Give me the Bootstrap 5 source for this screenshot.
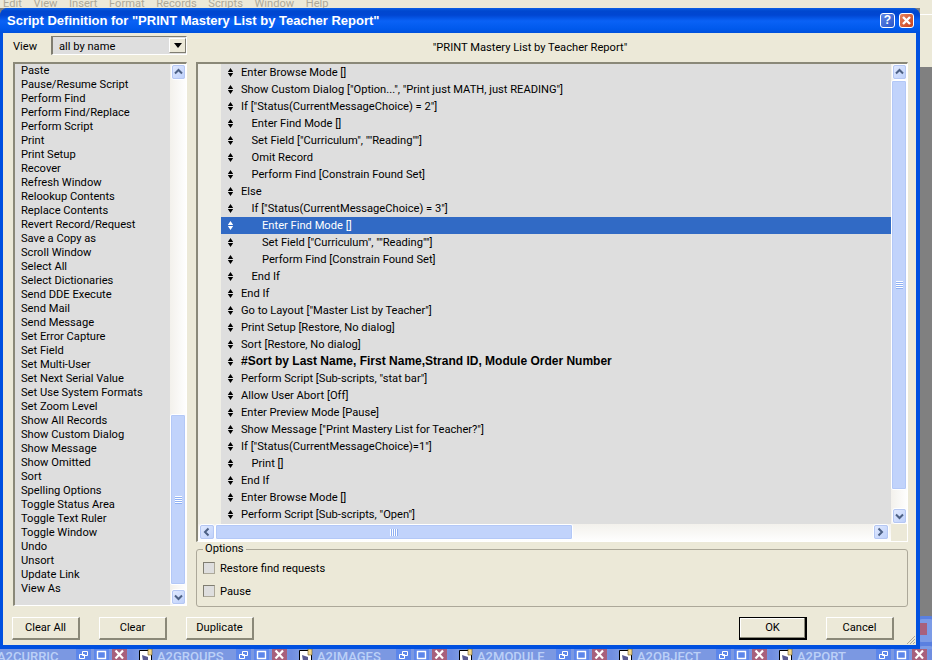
<!DOCTYPE html>
<html lang="en">
<head>
<meta charset="utf-8">
<title>Script Definition</title>
<link href="https://cdn.jsdelivr.net/npm/bootstrap@5.3.0/dist/css/bootstrap.min.css" rel="stylesheet">
<style>
html,body{height:660px;overflow:hidden;}
body{background:#808080;font-family:Roboto,"Liberation Sans",Arial,sans-serif;font-size:11.15px;line-height:14px;color:#000;}
.menu-strip{height:8px;background:#ece9d8;color:#aca899;overflow:hidden;padding-left:3px;gap:11.5px;line-height:7px;font-size:11.15px;}
.desk{height:641px;}
.dlg{width:920px;flex:none;border-radius:8px 8px 0 0;background:#0050e0;overflow:hidden;}
.dlg-title{height:25px;padding:0 6px 0 7px;background:linear-gradient(#0a5fe6 0,#0047cf 3px,#0046d2 7px,#0a62f6 13px,#0059ec 21px,#0050dc 25px);color:#fff;font-family:"Liberation Sans",Arial,sans-serif;font-weight:700;font-size:13px;}
.tbtn{width:15px;height:15px;border:1px solid #fff;border-radius:3px;font-size:12px;line-height:12px;text-align:center;color:#fff;font-weight:700;}
.tbtn-help{background:linear-gradient(135deg,#5f87e8,#2a55c8);}
.tbtn-close{background:linear-gradient(135deg,#e8845e,#c8401c);}
.dlg-body{height:612px;margin:0 4px 4px 3px;background:#ece9d8;padding:3px 8px 7px 10px;}
.col-left{width:174px;flex:none;margin-right:9px;}
.col-right{width:712px;flex:none;}
.view-row{height:19px;margin-bottom:7px;}
.view-label{width:38px;padding-top:2px;}
.view-box{width:136px;height:19px;background:#dedede;border:1px solid #fff;border-top-color:#7f7d71;border-left:2px solid #7f7d71;padding-left:6px;}
.view-box>span:first-child{padding-top:2px;}
.view-arrow{width:17px;height:15px;background:#ece9d8;border:1px solid #fff;border-right-color:#7f7d71;border-bottom-color:#7f7d71;}
.view-arrow i{display:block;width:0;height:0;border:4px solid transparent;border-top:5px solid #000;border-bottom:0;}
.panel-sunk{border-style:solid;border-width:2px 1px 1px 2px;border-color:#8a8878 #fff #fff #8a8878;}
.cmd-list{height:544px;background:#dedede;}
.cmd-items{flex:1;padding:0 0 0 6px;margin:0;list-style:none;background:#dedede;border:0;border-radius:0;}
.cmd-items li{height:14px;white-space:nowrap;}
.sb-v{width:16px;flex:none;}
.sb-track-v{background:linear-gradient(90deg,#f3f1ec,#fefefe);}
.sb-track-h{background:linear-gradient(#f3f1ec,#fefefe);}
.sb-btn{flex:none;width:15px;height:16px;background:linear-gradient(135deg,#e3ebff,#bccffa);border:1px solid #fff;outline:1px solid #b5c7f3;outline-offset:-2px;border-radius:3px;}
.sb-btn svg{display:block;}
.sb-thumb{background:#c1d3fb;border:1px solid #fff;border-radius:2px;box-shadow:inset 0 0 0 1px #b3c8f7;}
.sb-btn-h{width:16px;margin-left:1px;}
.sb-btn-h2{width:16px;margin-right:2px;}
.grip-lines{width:7px;height:8px;background:repeating-linear-gradient(#fff 0 1px,#8fb0f3 1px 2px);}
.grip-lines-h{width:8px;height:7px;background:repeating-linear-gradient(90deg,#fff 0 1px,#8fb0f3 1px 2px);}
.heading-row{height:19px;margin-bottom:7px;padding-right:44px;padding-top:4px;}
.script-panel{height:480px;background:#ece9d8;}
.gutter{width:23px;flex:none;background:#f0efe6;}
.rows{flex:1;background:#dedede;}
.srow{height:17px;padding-left:6px;white-space:nowrap;line-height:17px;}
.srow svg{flex:none;margin-right:7px;}
.srow.active{background:#316ac5;color:#fff;}
.srow.boldrow{font-weight:700;font-family:"Liberation Sans",Arial,sans-serif;font-size:12px;}
.ind1{padding-left:10.5px;}
.ind2{padding-left:21px;}
.sb-corner{width:16px;}
.opts{height:66px;margin:-1px 0 0;padding:0 6px;border:1px solid #aca899;border-radius:3px;}
.opts legend{float:none;width:auto;font-size:11.15px;line-height:16px;margin:0 0 -1px;padding:0 2px;}
.opt-line{height:23px;}
.opt-line span{padding-top:2px;}
.opt-line .form-check-input{width:12px;height:12px;margin:0 5px 0 0;background:#dedede;border:1px solid #aca899;border-top-color:#7f7d71;border-left-color:#7f7d71;border-radius:0;float:none;}
.xp-btn{width:68px;height:23px;padding:0;font-size:11.15px;line-height:18px;color:#000;background:#ece9d8;border:1px solid #fff;border-right:2px solid #8a8878;border-bottom:2px solid #8a8878;border-radius:0;}
.xp-btn.default{border:1px solid #000;border-right:2px solid #000;border-bottom:2px solid #000;box-shadow:inset -1px -1px 0 #8a8878,inset 1px 1px 0 #fff;}
.btn-first{margin-left:-1px;}
.btn-next{margin-left:19px;}
.btn-last{margin-left:19px;margin-right:14px;}
.btn-row{height:23px;margin-top:10px;}
.grip-corner{position:absolute;right:0;bottom:0;width:10px;height:10px;}
.right-strip{width:12px;flex:none;position:relative;overflow:hidden;}
.strip-top{height:59px;background:#ece9d8;border-top:1px solid #ece9d8;}
.strip-top i{display:block;height:1px;background:#fff;margin-top:5px;}
.peek{position:absolute;left:-4px;width:20px;background:#7c9be6;border:3px solid #5a80e0;border-radius:6px;}
.peek-a{top:608px;height:29px;}
.peek-b{top:635px;height:20px;}
.peek-x{position:absolute;left:0;top:4px;width:8px;height:12px;background:#a8607c;}
.taskbar{height:11px;background:#7b98e2;overflow:hidden;}
.task{width:160px;flex:none;height:11px;color:#bcd0f7;font-family:Roboto,sans-serif;font-weight:500;font-size:13px;line-height:15px;overflow:hidden;background:linear-gradient(90deg,#7b98e2,#7b98e2 146px,#6f8de0 152px,#7b98e2 160px);}
.task-first{margin-left:-21px;}
.task-ic{width:14px;height:11px;flex:none;margin-right:4px;}
.task-name{width:79px;flex:none;overflow:hidden;}
.task-b{width:15px;height:11px;flex:none;margin-right:3px;background:#5c86ea;}
.task-b svg{display:block;}
.task-b.red{background:#a8607c;margin-right:0;}
</style>
</head>
<body class="d-flex flex-column">

<div class="menu-strip d-flex"><span>Edit</span><span>View</span><span>Insert</span><span>Format</span><span>Records</span><span>Scripts</span><span>Window</span><span>Help</span></div>

<svg width="0" height="0" class="position-absolute">
  <symbol id="dm" viewBox="0 0 7 9"><path d="M3.5 0 6.2 4.1H.8ZM.8 4.9H6.2L3.5 9Z" fill="currentColor"/></symbol>
  <symbol id="up" viewBox="0 0 13 14"><path d="M3 8.5 6.5 5 10 8.5" fill="none" stroke="#4d6185" stroke-width="2"/></symbol>
  <symbol id="dn" viewBox="0 0 13 14"><path d="M3 5.5 6.5 9 10 5.5" fill="none" stroke="#4d6185" stroke-width="2"/></symbol>
  <symbol id="lf" viewBox="0 0 13 14"><path d="M8.5 3.5 5 7 8.5 10.5" fill="none" stroke="#4d6185" stroke-width="2"/></symbol>
  <symbol id="rt" viewBox="0 0 13 14"><path d="M4.5 3.5 8 7 4.5 10.5" fill="none" stroke="#4d6185" stroke-width="2"/></symbol>
  <symbol id="tr" viewBox="0 0 15 11"><path d="M6.5 2.5h5v4h-5zM3.5 5.5h5v4h-5z" fill="#5c86ea" stroke="#fff"/></symbol>
  <symbol id="tm" viewBox="0 0 15 11"><path d="M3.5 2.5h8v7h-8z" fill="none" stroke="#fff" stroke-width="1.4"/></symbol>
  <symbol id="tx" viewBox="0 0 15 11"><path d="M3.5 1.5 11 9.5M11 1.5 3.5 9.5" fill="none" stroke="#fff" stroke-width="2.2"/></symbol>
  <symbol id="ti" viewBox="0 0 14 11"><path d="M.5 1.5h12v10H.5Z" fill="#fff" stroke="#000"/><path d="M9 0h4v6H9Z" fill="#f2d68a" stroke="#6b5a20" stroke-width=".6"/><path d="M3 6l6 2v4H4Z" fill="#5a5a90"/></symbol>
</svg>

<div class="desk d-flex">
  <div class="dlg d-flex flex-column">
    <div class="dlg-title d-flex align-items-center">
      <span class="flex-grow-1">Script Definition for "PRINT Mastery List by Teacher Report"</span>
      <span class="tbtn tbtn-help me-1">?</span>
      <span class="tbtn tbtn-close d-flex align-items-center justify-content-center"><svg width="11" height="11" viewBox="0 0 11 11"><path d="M2 2 9 9M9 2 2 9" stroke="#fff" stroke-width="2.4"/></svg></span>
    </div>
    <div class="dlg-body d-flex flex-column position-relative">
      <div class="d-flex flex-grow-1">
        <div class="col-left d-flex flex-column">
          <div class="view-row d-flex align-items-center">
            <span class="view-label">View</span>
            <div class="view-box d-flex align-items-center justify-content-between"><span>all by name</span><span class="view-arrow d-flex align-items-center justify-content-center"><i></i></span></div>
          </div>
          <div class="cmd-list panel-sunk d-flex">
            <ul class="cmd-items">
              <li>Paste</li><li>Pause/Resume Script</li><li>Perform Find</li><li>Perform Find/Replace</li><li>Perform Script</li><li>Print</li><li>Print Setup</li><li>Recover</li><li>Refresh Window</li><li>Relookup Contents</li><li>Replace Contents</li><li>Revert Record/Request</li><li>Save a Copy as</li><li>Scroll Window</li><li>Select All</li><li>Select Dictionaries</li><li>Send DDE Execute</li><li>Send Mail</li><li>Send Message</li><li>Set Error Capture</li><li>Set Field</li><li>Set Multi-User</li><li>Set Next Serial Value</li><li>Set Use System Formats</li><li>Set Zoom Level</li><li>Show All Records</li><li>Show Custom Dialog</li><li>Show Message</li><li>Show Omitted</li><li>Sort</li><li>Spelling Options</li><li>Toggle Status Area</li><li>Toggle Text Ruler</li><li>Toggle Window</li><li>Undo</li><li>Unsort</li><li>Update Link</li><li>View As</li>
            </ul>
            <div class="sb-v sb-track-v d-flex flex-column align-items-center">
              <div class="sb-btn"><svg width="13" height="14"><use href="#up"/></svg></div>
              <div class="flex-grow-1"></div>
              <div class="sb-thumb d-flex align-items-center justify-content-center w-100" style="height:171px"><span class="grip-lines"></span></div>
              <div class="sb-btn mt-1"><svg width="13" height="14"><use href="#dn"/></svg></div>
            </div>
          </div>
        </div>
        <div class="col-right d-flex flex-column">
          <div class="heading-row d-flex align-items-center justify-content-center">"PRINT Mastery List by Teacher Report"</div>
          <div class="script-panel panel-sunk d-flex flex-column">
            <div class="d-flex" style="height:460px">
              <div class="gutter"></div>
              <div class="rows">
                <div class="srow d-flex align-items-center"><svg width="7" height="9"><use href="#dm"/></svg>Enter Browse Mode []</div>
                <div class="srow d-flex align-items-center"><svg width="7" height="9"><use href="#dm"/></svg>Show Custom Dialog ["Option...", "Print just MATH, just READING"]</div>
                <div class="srow d-flex align-items-center"><svg width="7" height="9"><use href="#dm"/></svg>If ["Status(CurrentMessageChoice) = 2"]</div>
                <div class="srow d-flex align-items-center"><svg width="7" height="9"><use href="#dm"/></svg><span class="ind1">Enter Find Mode []</span></div>
                <div class="srow d-flex align-items-center"><svg width="7" height="9"><use href="#dm"/></svg><span class="ind1">Set Field ["Curriculum", ""Reading""]</span></div>
                <div class="srow d-flex align-items-center"><svg width="7" height="9"><use href="#dm"/></svg><span class="ind1">Omit Record</span></div>
                <div class="srow d-flex align-items-center"><svg width="7" height="9"><use href="#dm"/></svg><span class="ind1">Perform Find [Constrain Found Set]</span></div>
                <div class="srow d-flex align-items-center"><svg width="7" height="9"><use href="#dm"/></svg>Else</div>
                <div class="srow d-flex align-items-center"><svg width="7" height="9"><use href="#dm"/></svg><span class="ind1">If ["Status(CurrentMessageChoice) = 3"]</span></div>
                <div class="srow active d-flex align-items-center"><svg width="7" height="9"><use href="#dm"/></svg><span class="ind2">Enter Find Mode []</span></div>
                <div class="srow d-flex align-items-center"><svg width="7" height="9"><use href="#dm"/></svg><span class="ind2">Set Field ["Curriculum", ""Reading""]</span></div>
                <div class="srow d-flex align-items-center"><svg width="7" height="9"><use href="#dm"/></svg><span class="ind2">Perform Find [Constrain Found Set]</span></div>
                <div class="srow d-flex align-items-center"><svg width="7" height="9"><use href="#dm"/></svg><span class="ind1">End If</span></div>
                <div class="srow d-flex align-items-center"><svg width="7" height="9"><use href="#dm"/></svg>End If</div>
                <div class="srow d-flex align-items-center"><svg width="7" height="9"><use href="#dm"/></svg>Go to Layout ["Master List by Teacher"]</div>
                <div class="srow d-flex align-items-center"><svg width="7" height="9"><use href="#dm"/></svg>Print Setup [Restore, No dialog]</div>
                <div class="srow d-flex align-items-center"><svg width="7" height="9"><use href="#dm"/></svg>Sort [Restore, No dialog]</div>
                <div class="srow boldrow d-flex align-items-center"><svg width="7" height="9"><use href="#dm"/></svg>#Sort by Last Name, First Name,Strand ID, Module Order Number</div>
                <div class="srow d-flex align-items-center"><svg width="7" height="9"><use href="#dm"/></svg>Perform Script [Sub-scripts, "stat bar"]</div>
                <div class="srow d-flex align-items-center"><svg width="7" height="9"><use href="#dm"/></svg>Allow User Abort [Off]</div>
                <div class="srow d-flex align-items-center"><svg width="7" height="9"><use href="#dm"/></svg>Enter Preview Mode [Pause]</div>
                <div class="srow d-flex align-items-center"><svg width="7" height="9"><use href="#dm"/></svg>Show Message ["Print Mastery List for Teacher?"]</div>
                <div class="srow d-flex align-items-center"><svg width="7" height="9"><use href="#dm"/></svg>If ["Status(CurrentMessageChoice)=1"]</div>
                <div class="srow d-flex align-items-center"><svg width="7" height="9"><use href="#dm"/></svg><span class="ind1">Print []</span></div>
                <div class="srow d-flex align-items-center"><svg width="7" height="9"><use href="#dm"/></svg>End If</div>
                <div class="srow d-flex align-items-center"><svg width="7" height="9"><use href="#dm"/></svg>Enter Browse Mode []</div>
                <div class="srow d-flex align-items-center"><svg width="7" height="9"><use href="#dm"/></svg>Perform Script [Sub-scripts, "Open"]</div>
              </div>
              <div class="sb-v sb-track-v d-flex flex-column align-items-center">
                <div class="sb-btn"><svg width="13" height="14"><use href="#up"/></svg></div>
                <div class="sb-thumb d-flex align-items-center justify-content-center w-100" style="height:410px"><span class="grip-lines"></span></div>
                <div class="flex-grow-1"></div>
                <div class="sb-btn"><svg width="13" height="14"><use href="#dn"/></svg></div>
              </div>
            </div>
            <div class="d-flex flex-grow-1">
              <div class="sb-track-h flex-grow-1 d-flex align-items-start">
                <div class="sb-btn sb-btn-h"><svg width="13" height="14"><use href="#lf"/></svg></div>
                <div class="sb-thumb d-flex align-items-center justify-content-center" style="width:358px;height:16px"><span class="grip-lines-h"></span></div>
                <div class="flex-grow-1"></div>
                <div class="sb-btn sb-btn-h2"><svg width="13" height="14"><use href="#rt"/></svg></div>
              </div>
              <div class="sb-corner"></div>
            </div>
          </div>
          <fieldset class="opts">
            <legend>Options</legend>
            <div class="opt-line d-flex align-items-center"><input class="form-check-input" type="checkbox" aria-label="Restore find requests"><span>Restore find requests</span></div>
            <div class="opt-line d-flex align-items-center"><input class="form-check-input" type="checkbox" aria-label="Pause"><span>Pause</span></div>
          </fieldset>
        </div>
      </div>
      <div class="btn-row d-flex">
        <button class="btn xp-btn btn-first" type="button">Clear All</button>
        <button class="btn xp-btn btn-next" type="button">Clear</button>
        <button class="btn xp-btn btn-next" type="button">Duplicate</button>
        <div class="flex-grow-1"></div>
        <button class="btn xp-btn default" type="button">OK</button>
        <button class="btn xp-btn btn-last" type="button">Cancel</button>
      </div>
      <svg class="grip-corner" viewBox="0 0 10 10"><path d="M9 1 1 9M9 4 4 9M9 7 7 9" stroke="#aca899" fill="none"/></svg>
    </div>
  </div>
  <div class="right-strip">
    <div class="strip-top"><i></i></div>
    <div class="peek peek-a"><span class="peek-x"></span></div>
    <div class="peek peek-b"></div>
  </div>
</div>

<div class="taskbar d-flex">
  <div class="task task-first d-flex"><svg class="task-ic" width="14" height="11"><use href="#ti"/></svg><span class="task-name">A2CURRIC</span><span class="task-b"><svg width="15" height="11"><use href="#tr"/></svg></span><span class="task-b"><svg width="15" height="11"><use href="#tm"/></svg></span><span class="task-b red"><svg width="15" height="11"><use href="#tx"/></svg></span></div>
  <div class="task d-flex"><svg class="task-ic" width="14" height="11"><use href="#ti"/></svg><span class="task-name">A2GROUPS</span><span class="task-b"><svg width="15" height="11"><use href="#tr"/></svg></span><span class="task-b"><svg width="15" height="11"><use href="#tm"/></svg></span><span class="task-b red"><svg width="15" height="11"><use href="#tx"/></svg></span></div>
  <div class="task d-flex"><svg class="task-ic" width="14" height="11"><use href="#ti"/></svg><span class="task-name">A2IMAGES</span><span class="task-b"><svg width="15" height="11"><use href="#tr"/></svg></span><span class="task-b"><svg width="15" height="11"><use href="#tm"/></svg></span><span class="task-b red"><svg width="15" height="11"><use href="#tx"/></svg></span></div>
  <div class="task d-flex"><svg class="task-ic" width="14" height="11"><use href="#ti"/></svg><span class="task-name">A2MODULE</span><span class="task-b"><svg width="15" height="11"><use href="#tr"/></svg></span><span class="task-b"><svg width="15" height="11"><use href="#tm"/></svg></span><span class="task-b red"><svg width="15" height="11"><use href="#tx"/></svg></span></div>
  <div class="task d-flex"><svg class="task-ic" width="14" height="11"><use href="#ti"/></svg><span class="task-name">A2OBJECT</span><span class="task-b"><svg width="15" height="11"><use href="#tr"/></svg></span><span class="task-b"><svg width="15" height="11"><use href="#tm"/></svg></span><span class="task-b red"><svg width="15" height="11"><use href="#tx"/></svg></span></div>
  <div class="task d-flex"><svg class="task-ic" width="14" height="11"><use href="#ti"/></svg><span class="task-name">A2PORT</span><span class="task-b"><svg width="15" height="11"><use href="#tr"/></svg></span><span class="task-b"><svg width="15" height="11"><use href="#tm"/></svg></span><span class="task-b red"><svg width="15" height="11"><use href="#tx"/></svg></span></div>
</div>
<script src="https://cdn.jsdelivr.net/npm/bootstrap@5.3.0/dist/js/bootstrap.bundle.min.js"></script>
</body>
</html>
